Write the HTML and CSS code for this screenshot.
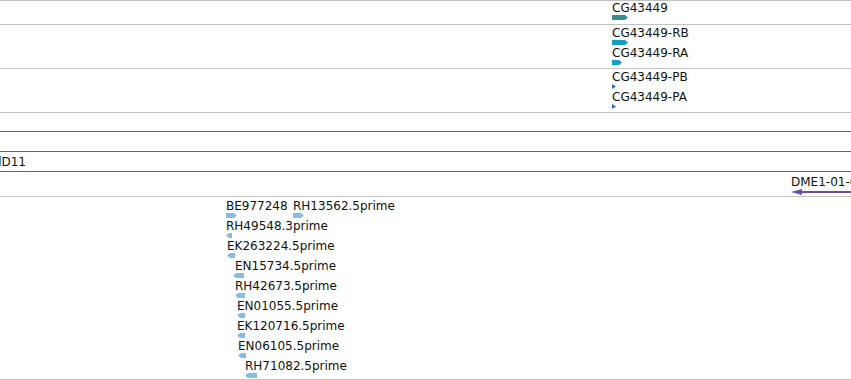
FILE: index.html
```html
<!DOCTYPE html>
<html>
<head>
<meta charset="utf-8">
<link rel="stylesheet" href="styles.css">
</head>
<body>
<div class="view">
  <div class="track t-gene">
    <div class="feat" style="left:612px;top:0px">
      <span class="label">CG43449</span>
      <svg class="glyph" width="17" height="5" viewBox="0 0 17 5"><polygon class="c-gene" points="0,0 13,0 16,2.5 13,5 0,5"/></svg>
    </div>
  </div>
  <div class="track t-tx">
    <div class="feat" style="left:612px;top:1px">
      <span class="label">CG43449-RB</span>
      <svg class="glyph" width="17" height="5" viewBox="0 0 17 5"><polygon class="c-rna" points="0,0 13,0 16,2.5 13,5 0,5"/></svg>
    </div>
    <div class="feat" style="left:612px;top:21px">
      <span class="label">CG43449-RA</span>
      <svg class="glyph" width="11" height="5" viewBox="0 0 11 5"><polygon class="c-rna" points="0,0 7,0 10,2.5 7,5 0,5"/></svg>
    </div>
  </div>
  <div class="track t-tx">
    <div class="feat" style="left:612px;top:1px">
      <span class="label">CG43449-PB</span>
      <svg class="glyph" width="5" height="5" viewBox="0 0 5 5"><polygon class="c-prot" points="0,0 4,2.5 0,5"/></svg>
    </div>
    <div class="feat" style="left:612px;top:21px">
      <span class="label">CG43449-PA</span>
      <svg class="glyph" width="5" height="5" viewBox="0 0 5 5"><polygon class="c-prot" points="0,0 4,2.5 0,5"/></svg>
    </div>
  </div>
  <div class="track t-empty1 purple"></div>
  <div class="track t-empty2 purple"></div>
  <div class="track t-clip purple">
    <span class="clip-label" style="right:825px">BACR7lD11</span>
  </div>
  <div class="track t-dme">
    <div class="feat" style="left:791px;top:3px">
      <span class="label">DME1-01-0123456</span>
      <svg class="glyph" width="70" height="6" viewBox="0 0 70 6"><polygon class="c-dme" points="0,3 11,0 11,2 70,2 70,4 11,4 11,6"/></svg>
    </div>
  </div>
  <div class="track t-est">
    <div class="feat" style="left:226px;top:2px">
      <span class="label">BE977248</span>
      <svg class="glyph" width="12" height="5" viewBox="0 0 12 5"><polygon class="c-est" points="0,0 8,0 11,2.5 8,5 0,5"/></svg>
    </div>
    <div class="feat" style="left:293px;top:2px">
      <span class="label">RH13562.5prime</span>
      <svg class="glyph" width="12" height="5" viewBox="0 0 12 5"><polygon class="c-est" points="0,0 8,0 11,2.5 8,5 0,5"/></svg>
    </div>
    <div class="feat" style="left:226px;top:22px">
      <span class="label">RH49548.3prime</span>
      <svg class="glyph" width="6" height="5" viewBox="0 0 6 5"><polygon class="c-est" points="0,2.5 3,0 6,0 6,5 3,5"/></svg>
    </div>
    <div class="feat" style="left:227px;top:42px">
      <span class="label">EK263224.5prime</span>
      <svg class="glyph" width="8" height="5" viewBox="0 0 8 5"><polygon class="c-est" points="0,2.5 3,0 8,0 8,5 3,5"/></svg>
    </div>
    <div class="feat" style="left:233px;top:62px">
      <span class="label lab-off2">EN15734.5prime</span>
      <svg class="glyph" width="11" height="5" viewBox="0 0 11 5"><polygon class="c-est" points="0,2.5 3,0 11,0 11,5 3,5"/></svg>
    </div>
    <div class="feat" style="left:235px;top:82px">
      <span class="label">RH42673.5prime</span>
      <svg class="glyph" width="10" height="5" viewBox="0 0 10 5"><polygon class="c-est" points="0,2.5 3,0 10,0 10,5 3,5"/></svg>
    </div>
    <div class="feat" style="left:237px;top:102px">
      <span class="label">EN01055.5prime</span>
      <svg class="glyph" width="8" height="5" viewBox="0 0 8 5"><polygon class="c-est" points="0,2.5 3,0 8,0 8,5 3,5"/></svg>
    </div>
    <div class="feat" style="left:237px;top:122px">
      <span class="label">EK120716.5prime</span>
      <svg class="glyph" width="8" height="5" viewBox="0 0 8 5"><polygon class="c-est" points="0,2.5 3,0 8,0 8,5 3,5"/></svg>
    </div>
    <div class="feat" style="left:238px;top:142px">
      <span class="label">EN06105.5prime</span>
      <svg class="glyph" width="8" height="5" viewBox="0 0 8 5"><polygon class="c-est" points="0,2.5 3,0 8,0 8,5 3,5"/></svg>
    </div>
    <div class="feat" style="left:245px;top:162px">
      <span class="label">RH71082.5prime</span>
      <svg class="glyph" width="12" height="5" viewBox="0 0 12 5"><polygon class="c-est" points="0,2.5 3,0 12,0 12,5 3,5"/></svg>
    </div>
  </div>
</div>
</body>
</html>
```

FILE: styles.css
```css
html, body {
  margin: 0;
  padding: 0;
  background: #ffffff;
}

body {
  font-family: "DejaVu Sans", "Noto Sans", sans-serif;
  font-size: 12px;
  color: #111111;
}

.view {
  width: 851px;
  height: 380px;
  overflow: hidden;
  border-top: 1px solid #c2c2c2;
  box-sizing: border-box;
}

.track {
  position: relative;
  border-bottom: 1px solid #c2c2c2;
  overflow: hidden;
}

.track.purple {
  border-bottom-color: #6e5c9e;
}

.t-gene { height: 23px; }
.t-tx { height: 43px; }
.t-empty1 { height: 18px; }
.t-empty2 { height: 19px; }
.t-clip { height: 19px; }
.t-dme { height: 24px; }
.t-est { height: 182px; }

.feat {
  position: absolute;
  white-space: nowrap;
}

.label {
  display: block;
  height: 14px;
  line-height: 14px;
}

.lab-off2 {
  margin-left: 2px;
}

.glyph {
  display: block;
}

.clip-label {
  position: absolute;
  top: 3px;
  line-height: 14px;
  white-space: nowrap;
}

.c-gene { fill: #3a8c92; }
.c-rna { fill: #179dc3; }
.c-prot { fill: #2f68d6; }
.c-dme { fill: #6a4fa6; }
.c-est { fill: #86bde3; }
```
